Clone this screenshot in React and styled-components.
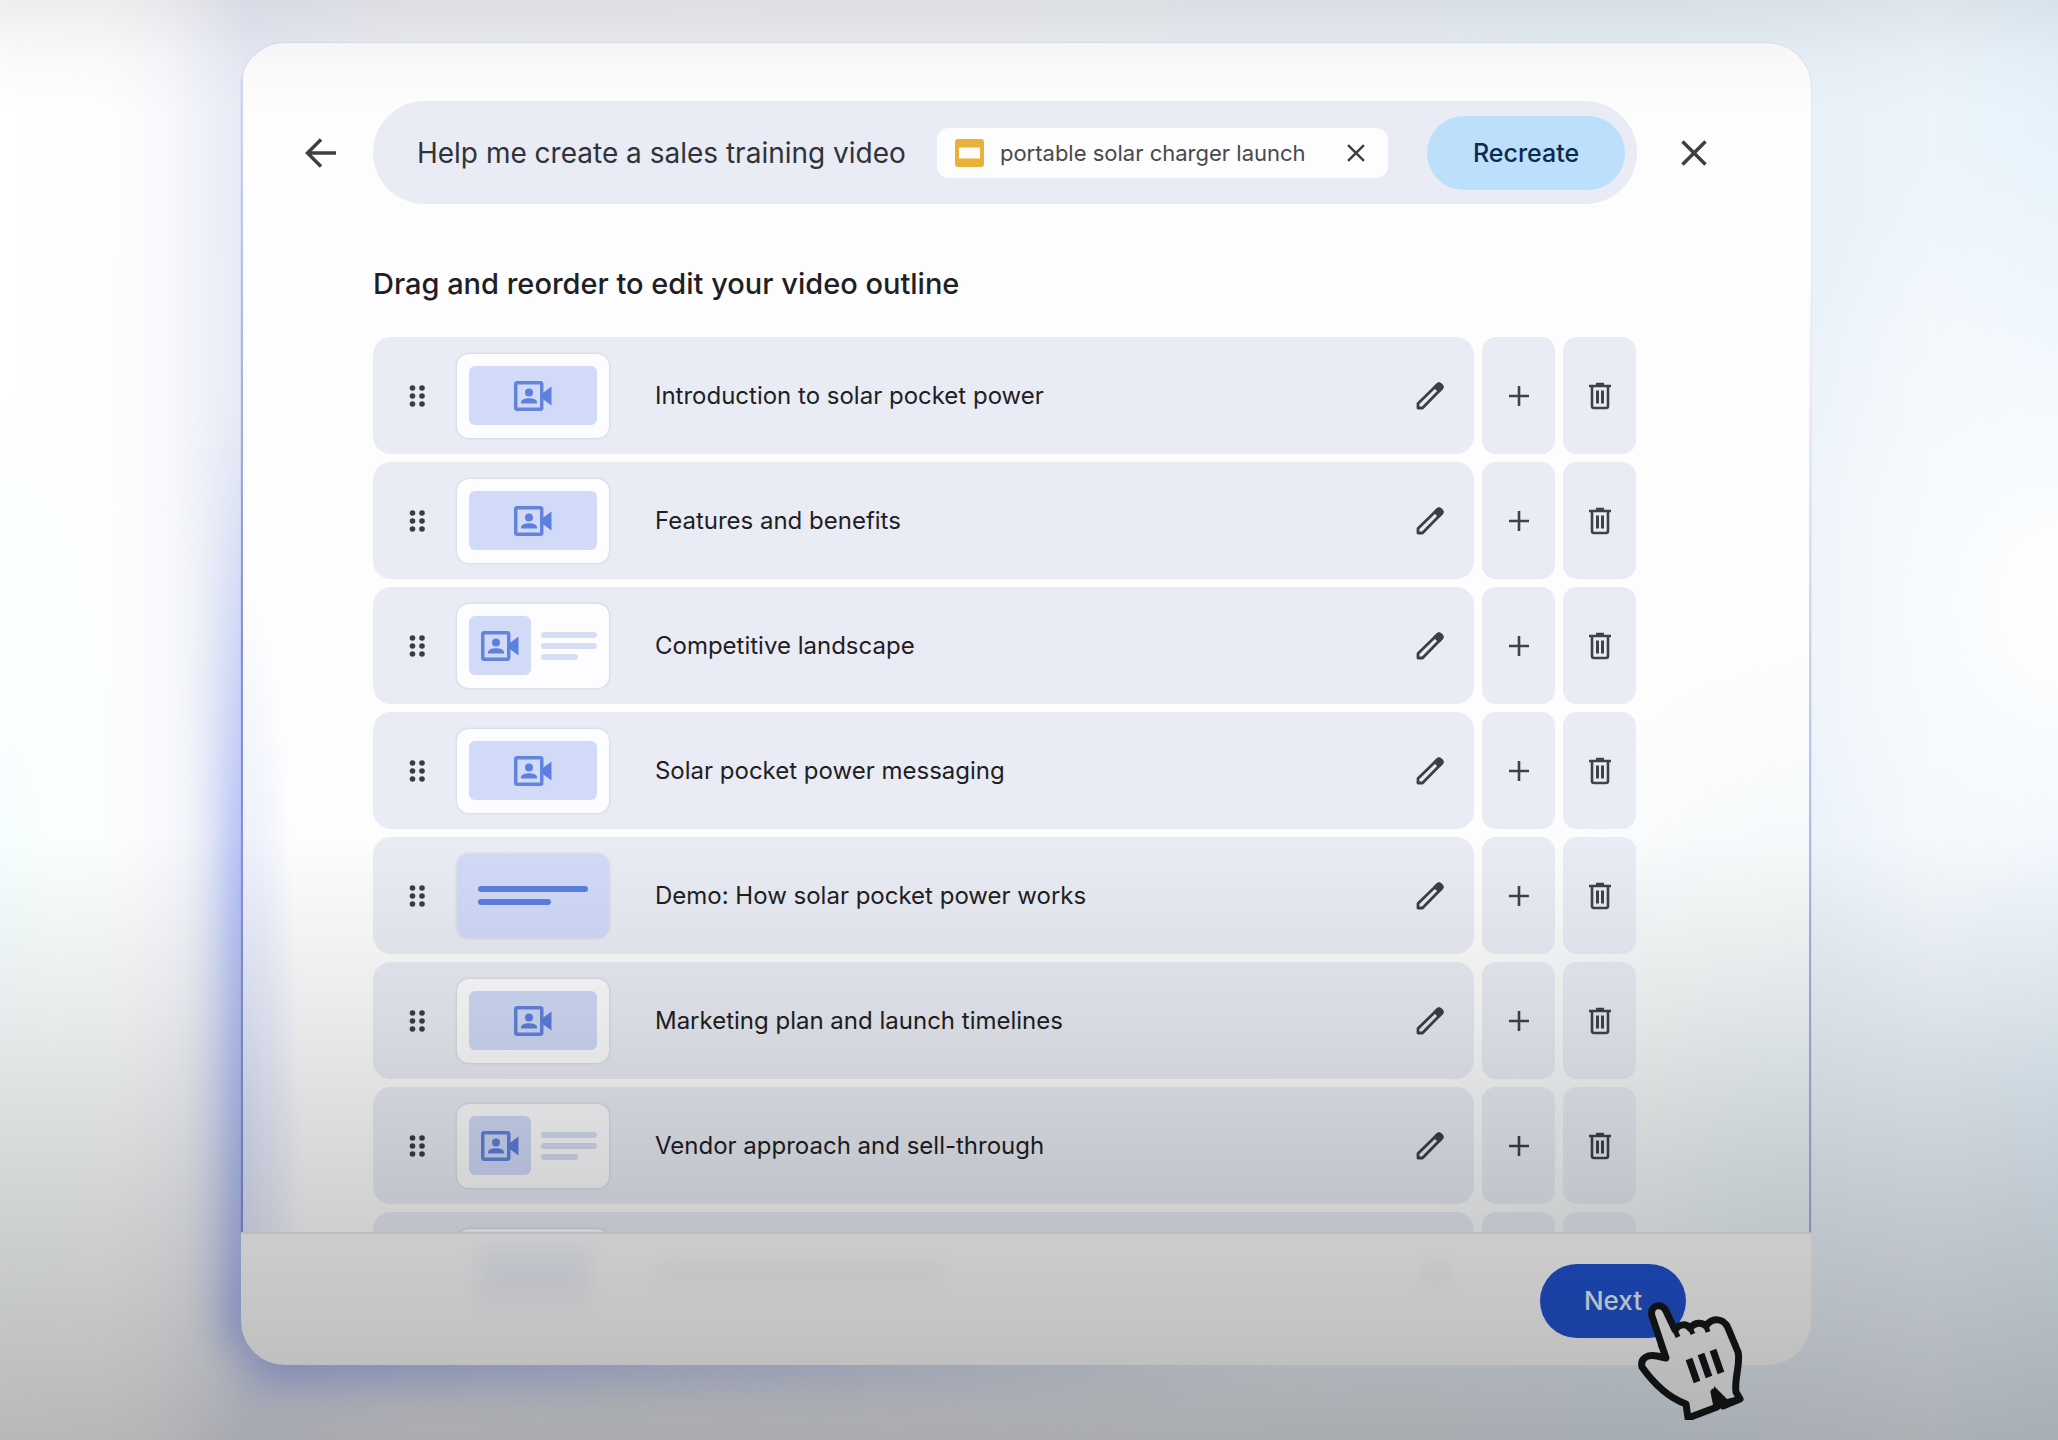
import { useState } from 'react'
import styled, { createGlobalStyle } from 'styled-components'

const GlobalStyle = createGlobalStyle`
  * {
    box-sizing: border-box;
  }

  body {
    margin: 0;
    font-family: Inter, 'Liberation Sans', sans-serif;
    color: #1f2023;
  }

  button,
  input {
    font: inherit;
    color: inherit;
  }
`

const Page = styled.div`
  position: relative;
  display: flex;
  height: 100vh;
  min-height: 900px;
  padding: 43px 12% 75px;
  overflow: hidden;
  background:
    radial-gradient(ellipse 16% 34% at 100% 42%, #ffffff 0%, rgba(255, 255, 255, 0) 100%),
    radial-gradient(ellipse 8% 40% at 0 62%, rgba(246, 254, 255, 0.9), rgba(246, 254, 255, 0)),
    linear-gradient(
      90deg,
      #ffffff 0%,
      #fefefe 5%,
      #f8f9fc 8%,
      #e7eaf5 12%,
      #edeef2 20%,
      #eceef3 50%,
      #e6eff7 80%,
      #e9f1f9 88%,
      #edf5fb 94%,
      #e6f2fb 100%
    );
`

const Shade = styled.div`
  position: absolute;
  inset: 0;
  pointer-events: none;
  background: linear-gradient(
    180deg,
    rgba(40, 40, 40, 0.08) 0%,
    rgba(0, 0, 0, 0.02) 4%,
    rgba(0, 0, 0, 0) 8%,
    rgba(0, 0, 0, 0) 58%,
    rgba(0, 0, 0, 0.07) 70%,
    rgba(0, 0, 0, 0.18) 85%,
    rgba(0, 0, 0, 0.28) 100%
  );
`

const Dialog = styled.main`
  position: relative;
  isolation: isolate;
  display: flex;
  flex: 1;
  flex-direction: column;
  margin-left: -6px;

  &::before,
  &::after {
    content: '';
    position: absolute;
    z-index: -1;
    filter: blur(20px);
  }

  &::before {
    inset: 28% auto 20px -16px;
    width: 100px;
    background: linear-gradient(180deg, rgba(160, 178, 248, 0), #a5b6f6 50%, #a3b3ee);
  }

  &::after {
    inset: auto 0 -20px 10px;
    height: 90px;
    background: linear-gradient(90deg, #a9b6f0, rgba(175, 188, 235, 0.6) 35%, rgba(170, 190, 225, 0) 65%);
  }
`

const Body = styled.div`
  position: relative;
  display: flex;
  flex: 1;
  flex-direction: column;
  min-height: 0;
  padding: 58px 175px 0 132px;
  overflow: hidden;
  border-radius: 44px 44px 0 0;
  box-shadow: 0 0 0 1px rgba(150, 160, 220, 0.15);
  background:
    linear-gradient(180deg, rgba(130, 145, 215, 0.3), #8392d8 50%) left / 2px 100% no-repeat,
    linear-gradient(180deg, rgba(110, 130, 225, 0) 20%, #a4b1e0 75%) right / 2px 100% no-repeat,
    radial-gradient(ellipse 60px 46% at 0 92%, rgba(180, 194, 250, 0.45), rgba(190, 202, 250, 0)),
    radial-gradient(ellipse 24% 48% at 100% 100%, rgba(228, 241, 244, 0.8), rgba(228, 241, 244, 0)),
    #fdfdfe;
`

const Header = styled.header`
  display: flex;
  align-items: center;
  margin: 0 -78px 0 -72px;
`

const IconButton = styled.button`
  display: inline-flex;
  align-items: center;
  justify-content: center;
  flex: none;
  width: 40px;
  height: 40px;
  padding: 0;
  border: 0;
  background: none;
  color: #3c4043;
  cursor: pointer;
`

const PromptBar = styled.form`
  display: flex;
  flex: 1;
  align-items: center;
  height: 103px;
  margin: 0 37px 0 32px;
  padding: 0 12px 0 44px;
  border-radius: 52px;
  background: #e9ecf4;
`

const PromptInput = styled.input`
  width: 520px;
  padding: 0;
  border: 0;
  outline: 0;
  background: none;
  font-size: 28px;
  color: #303338;
`

const Chip = styled.span`
  display: flex;
  flex: none;
  align-items: center;
  height: 50px;
  padding: 0 12px 0 18px;
  border-radius: 12px;
  background: #fdfdfe;
  font-size: 22px;
  color: #47494d;
`

const ChipLabel = styled.span`
  width: 318px;
  margin-left: 16px;
  white-space: nowrap;
`

const ChipRemove = styled(IconButton)`
  margin-left: 18px;
`

const Recreate = styled.button`
  width: 198px;
  height: 74px;
  margin-left: auto;
  border: 0;
  border-radius: 37px;
  background: #bce0fb;
  font-size: 25px;
  font-weight: 500;
  color: #0c2a4d;
  cursor: pointer;
`

const Heading = styled.h1`
  margin: 60px 0 33px;
  font-size: 29px;
  font-weight: 500;
  line-height: 40px;
  color: #1f2023;
`

const Outline = styled.ul`
  display: flex;
  flex-direction: column;
  gap: 8px;
  margin: 0;
  padding: 0;
  list-style: none;
`

const Row = styled.li`
  display: grid;
  grid-template-columns: 1fr 73px 73px;
  gap: 8px;
  height: 117px;
`

const Item = styled.div`
  display: flex;
  align-items: center;
  padding: 0 24px;
  border-radius: 18px;
  background: #e9ecf4;
`

const Side = styled.button`
  display: flex;
  align-items: center;
  justify-content: center;
  padding: 0;
  border: 0;
  border-radius: 14px;
  background: #e9ecf4;
  color: #3f4246;
  cursor: pointer;
`

const Thumb = styled.div`
  display: flex;
  flex: none;
  align-items: center;
  gap: 10px;
  width: 152px;
  height: 84px;
  margin-left: 20px;
  padding: 12px;
  border-radius: 12px;
  background: ${({ $kind }) => ($kind === 'text' ? '#d1dbf8' : '#fdfdff')};
  box-shadow: 0 0 3px rgba(60, 64, 80, 0.2);
`

const Presenter = styled.div`
  display: flex;
  flex: 1;
  align-items: center;
  justify-content: center;
  height: 59px;
  border-radius: 6px;
  background: #d1dbf8;
`

const Lines = styled.div`
  display: flex;
  flex-direction: column;
  gap: ${({ $strong }) => ($strong ? 7 : 5)}px;
  width: ${({ $strong }) => ($strong ? 110 : 56)}px;
  margin: ${({ $strong }) => ($strong ? '0 auto' : 0)};
`

const Line = styled.span`
  width: ${({ $short }) => ($short ? '66%' : '100%')};
  height: 6px;
  border-radius: 3px;
  background: ${({ $strong }) => ($strong ? '#5c7fe0' : '#d6ddf5')};
`

const ItemTitle = styled.span`
  flex: 1;
  margin-left: 46px;
  font-size: 24px;
`

const Footer = styled.footer`
  position: relative;
  display: flex;
  flex: none;
  align-items: center;
  justify-content: flex-end;
  height: 133px;
  padding: 2px 125px 0 0;
  border-top: 2px solid #e6e6ea;
  border-radius: 0 0 44px 44px;
  background: linear-gradient(180deg, #fbfbfd, #fdfdfd 60%);
  overflow: hidden;
`

// the next outline row, faintly visible through the frosted footer
const Ghost = styled.div`
  position: absolute;
  inset: 0 173px auto 132px;
  display: flex;
  align-items: center;
  height: 80px;
  padding: 0 24px 0 104px;
  filter: blur(9px);
  opacity: 0.5;
`

const GhostThumb = styled.span`
  width: 114px;
  height: 54px;
  background: #e6eaf9;
`

const GhostTitle = styled.span`
  width: 290px;
  height: 16px;
  margin-left: 64px;
  background: #ececf0;
`

const GhostAction = styled.span`
  width: 24px;
  height: 24px;
  margin-left: auto;
  margin-right: 166px;
  background: #e8e9ee;
`

const NextButton = styled.button`
  position: relative;
  width: 146px;
  height: 74px;
  border: 0;
  border-radius: 37px;
  background: #2152d0;
  font-size: 26px;
  font-weight: 500;
  color: #e6f5ff;
  cursor: pointer;
`

const Hand = styled.svg`
  position: absolute;
  right: 64px;
  bottom: -55px;
  pointer-events: none;
`

const BackIcon = () => (
  <svg width="32" height="30" viewBox="0 0 32 30" fill="none" stroke="currentColor" strokeWidth="3.500">
    <path d="M31 15H3M16 1.500L2.500 15L16 28.500" />
  </svg>
)

const CrossIcon = ({ size, weight }) => (
  <svg width={size} height={size} viewBox="0 0 26 26" fill="none" stroke="currentColor" strokeWidth={weight}>
    <path d="M1.500 1.500L24.500 24.500M24.500 1.500L1.500 24.500" />
  </svg>
)

const SlidesIcon = () => (
  <svg width="29" height="28" viewBox="0 0 29 28" fill="none">
    <rect width="29" height="28" rx="3" fill="#e8b23a" />
    <rect x="4" y="8.500" width="21" height="11" fill="#fffdf5" />
  </svg>
)

const DragIcon = () => (
  <svg width="40" height="24" viewBox="0 0 40 24" fill="#3a3c40">
    {[4, 12, 20].map((y) => (
      <g key={y}>
        <circle cx="15.500" cy={y} r="2.800" />
        <circle cx="25" cy={y} r="2.800" />
      </g>
    ))}
  </svg>
)

const PresenterIcon = () => (
  <svg width="38" height="30" viewBox="0 0 38 30" fill="#5d80e0">
    <rect x="1.750" y="1.750" width="26" height="26.500" rx="1.500" fill="none" stroke="#6384dd" strokeWidth="3.500" />
    <path d="M28 12.500L37.500 5.500V24.500L28 17.500Z" />
    <circle cx="15" cy="11.500" r="4" />
    <path d="M7 22.500V21C7 18.500 11 17.200 15 17.200S23 18.500 23 21V22.500Z" />
  </svg>
)

const PencilIcon = () => (
  <svg width="28" height="28" viewBox="0 0 28 28" fill="none" stroke="currentColor" strokeWidth="2.800" strokeLinejoin="round">
    <path d="M2 26V21.500L21.500 2.500Q23 1.200 24.500 2.500L25.500 3.500Q26.800 5 25.500 6.500L6.500 26Z" />
    <path d="M19 5L22 2Q23 1.200 24.500 2.500L25.500 3.500Q26.800 5 25.800 6.200L23 9Z" fill="currentColor" />
  </svg>
)

const PlusIcon = () => (
  <svg width="20" height="20" viewBox="0 0 20 20" fill="none" stroke="currentColor" strokeWidth="2.600">
    <path d="M10 0V20M0 10H20" />
  </svg>
)

const TrashIcon = () => (
  <svg width="22" height="28" viewBox="0 0 22 28" fill="none" stroke="currentColor" strokeWidth="2.600">
    <path d="M0 4H22M7 2H15M3 4V24Q3 26 5 26H17Q19 26 19 24V4" />
    <path d="M8.500 8.500V21.500M13.500 8.500V21.500" strokeWidth="3" />
  </svg>
)

const HandCursor = () => (
  <Hand width="110" height="118" viewBox="0 0 110 118" aria-hidden="true">
    <path
      d="M29 56L15 14C12 3 25 0 29 9L38 28C42 22 49 21 53 26C58 20 65 20 69 24C75 15 87 16 91 26L101 50C104 61 97 76 99 90L103 97L86 104L77 90L80 105L51 116L49 102C30 95 17 82 5 65C3 56 11 52 20 54Z"
      fill="#f8f8f8"
      stroke="#15171a"
      strokeWidth="7"
      strokeLinejoin="round"
    />
    <path d="M77 84L90 97L102 94V101L86 106L77 104Z" fill="#15171a" />
    <path d="M29 56L23 42M38 28L41 35M53 26L56 32M69 24L71 30" stroke="#15171a" strokeWidth="5" />
    <path d="M52 57L60 80M64 52L72 75M76 48L84 71" stroke="#15171a" strokeWidth="7" />
  </Hand>
)

const Thumbnail = ({ kind }) => (
  <Thumb $kind={kind}>
    {kind !== 'text' && (
      <Presenter>
        <PresenterIcon />
      </Presenter>
    )}
    {kind === 'split' && (
      <Lines>
        <Line />
        <Line />
        <Line $short />
      </Lines>
    )}
    {kind === 'text' && (
      <Lines $strong>
        <Line $strong />
        <Line $strong $short />
      </Lines>
    )}
  </Thumb>
)

const OutlineRow = ({ title, kind }) => (
  <Row>
    <Item>
      <IconButton type="button" aria-label="Reorder">
        <DragIcon />
      </IconButton>
      <Thumbnail kind={kind} />
      <ItemTitle>{title}</ItemTitle>
      <IconButton type="button" aria-label="Edit">
        <PencilIcon />
      </IconButton>
    </Item>
    <Side type="button" aria-label="Add scene">
      <PlusIcon />
    </Side>
    <Side type="button" aria-label="Delete scene">
      <TrashIcon />
    </Side>
  </Row>
)

const scenes = [
  { title: 'Introduction to solar pocket power', kind: 'presenter' },
  { title: 'Features and benefits', kind: 'presenter' },
  { title: 'Competitive landscape', kind: 'split' },
  { title: 'Solar pocket power messaging', kind: 'presenter' },
  { title: 'Demo: How solar pocket power works', kind: 'text' },
  { title: 'Marketing plan and launch timelines', kind: 'presenter' },
  { title: 'Vendor approach and sell-through', kind: 'split' },
  { title: '', kind: 'presenter' },
]

const App = () => {
  const [prompt, setPrompt] = useState('Help me create a sales training video')

  return (
    <Page>
      <GlobalStyle />
      <Dialog>
        <Body>
          <Header>
            <IconButton type="button" aria-label="Back">
              <BackIcon />
            </IconButton>
            <PromptBar onSubmit={(e) => e.preventDefault()}>
              <PromptInput
                aria-label="Prompt"
                value={prompt}
                onChange={(e) => setPrompt(e.target.value)}
              />
              <Chip>
                <SlidesIcon />
                <ChipLabel>portable solar charger launch</ChipLabel>
                <ChipRemove type="button" aria-label="Remove file">
                  <CrossIcon size={18} weight={3.5} />
                </ChipRemove>
              </Chip>
              <Recreate type="submit">Recreate</Recreate>
            </PromptBar>
            <IconButton type="button" aria-label="Close">
              <CrossIcon size={26} weight={3.5} />
            </IconButton>
          </Header>
          <Heading>Drag and reorder to edit your video outline</Heading>
          <Outline>
            {scenes.map((scene) => (
              <OutlineRow key={scene.title} {...scene} />
            ))}
          </Outline>
        </Body>
        <Footer>
          <Ghost aria-hidden="true">
            <GhostThumb />
            <GhostTitle />
            <GhostAction />
          </Ghost>
          <NextButton type="button">Next</NextButton>
        </Footer>
        <HandCursor />
      </Dialog>
      <Shade />
    </Page>
  )
}

export default App
